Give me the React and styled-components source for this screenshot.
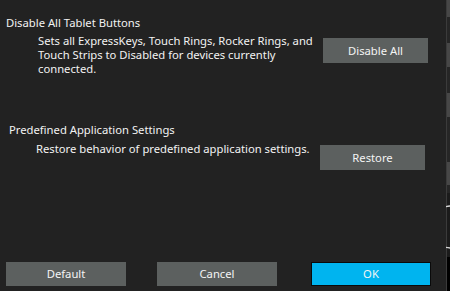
import React from 'react'
import styled, { createGlobalStyle } from 'styled-components'

const GlobalStyle = createGlobalStyle`
  html, body {
    margin: 0;
    padding: 0;
    background: #222222;
  }
  body {
    font-family: "Noto Sans", "Liberation Sans", sans-serif;
    font-size: 11.25px;
    color: #f2f2f2;
  }
`

const Window = styled.div`
  display: flex;
  width: 450px;
  height: 291px;
  overflow: hidden;
  background: #222222;
`

const Content = styled.div`
  flex: 1;
  display: flex;
  flex-direction: column;
`

const Section = styled.section`
  display: flex;
  flex-direction: column;
  margin-top: ${(p) => p.top}px;
`

const Title = styled.div`
  line-height: 14px;
  padding-left: ${(p) => p.indent}px;
  white-space: nowrap;
`

const Row = styled.div`
  display: flex;
  align-items: flex-start;
  margin-top: ${(p) => p.gap}px;
`

const Description = styled.div`
  box-sizing: border-box;
  flex: none;
  width: ${(p) => p.width}px;
  padding-left: ${(p) => p.indent}px;
  line-height: 14px;
  white-space: nowrap;
`

const Button = styled.button`
  flex: none;
  width: ${(p) => p.w || 105}px;
  height: ${(p) => p.h || 25}px;
  margin-top: ${(p) => p.mt || 0}px;
  margin-left: ${(p) => p.ml || 0}px;
  padding: 0;
  border: 1px solid ${(p) => (p.primary ? '#0a0a0a' : '#5c605f')};
  background: ${(p) => (p.primary ? '#00b4ef' : '#5c605f')};
  color: #f4f4f4;
  font-family: inherit;
  font-size: 11.25px;
  line-height: 1;
  cursor: pointer;
`

const Footer = styled.footer`
  display: flex;
  margin-top: auto;
  margin-bottom: 5px;
  padding-left: 6px;
`

const Strip = styled.div`
  position: relative;
  width: 4px;
  display: flex;
  flex-direction: column;
  border-left: 1px solid #3b3b3b;
  box-sizing: border-box;
`

const Segment = styled.div`
  height: ${(p) => p.h}px;
  background: ${(p) => p.bg};
  flex-shrink: 0;
`

const Arc = styled.svg`
  position: absolute;
  left: -1px;
  top: 205px;
`

export default function App() {
  return (
    <Window>
      <GlobalStyle />
      <Content>
        <Section top={16}>
          <Title indent={6}>Disable All Tablet Buttons</Title>
          <Row gap={4}>
            <Description indent={38} width={323}>
              Sets all ExpressKeys, Touch Rings, Rocker Rings, and
              <br />
              Touch Strips to Disabled for devices currently
              <br />
              connected.
            </Description>
            <Button mt={4}>Disable All</Button>
          </Row>
        </Section>
        <Section top={47}>
          <Title indent={9}>Predefined Application Settings</Title>
          <Row gap={5}>
            <Description indent={36} width={320}>
              Restore behavior of predefined application settings.
            </Description>
            <Button mt={3}>Restore</Button>
          </Row>
        </Section>
        <Footer>
          <Button w={120} h={24}>Default</Button>
          <Button w={120} h={24} ml={31}>Cancel</Button>
          <Button w={120} h={24} ml={34} primary>OK</Button>
        </Footer>
      </Content>
      <Strip>
        <Segment h={17} bg="#474747" />
        <Segment h={26} bg="#262626" />
        <Segment h={24} bg="#474747" />
        <Segment h={26} bg="#262626" />
        <Segment h={24} bg="#474747" />
        <Segment h={45} bg="#262626" />
        <Segment h={23} bg="#474747" />
        <Segment h={8} bg="#262626" />
        <Segment h={64} bg="#1b1b1b" />
        <Segment h={34} bg="#000000" />
        <Arc width="5" height="44" viewBox="0 0 5 44">
          <path d="M5 1 A21 21 0 0 0 5 43" fill="none" stroke="#d8d8d8" strokeWidth="1.3" />
        </Arc>
      </Strip>
    </Window>
  )
}
